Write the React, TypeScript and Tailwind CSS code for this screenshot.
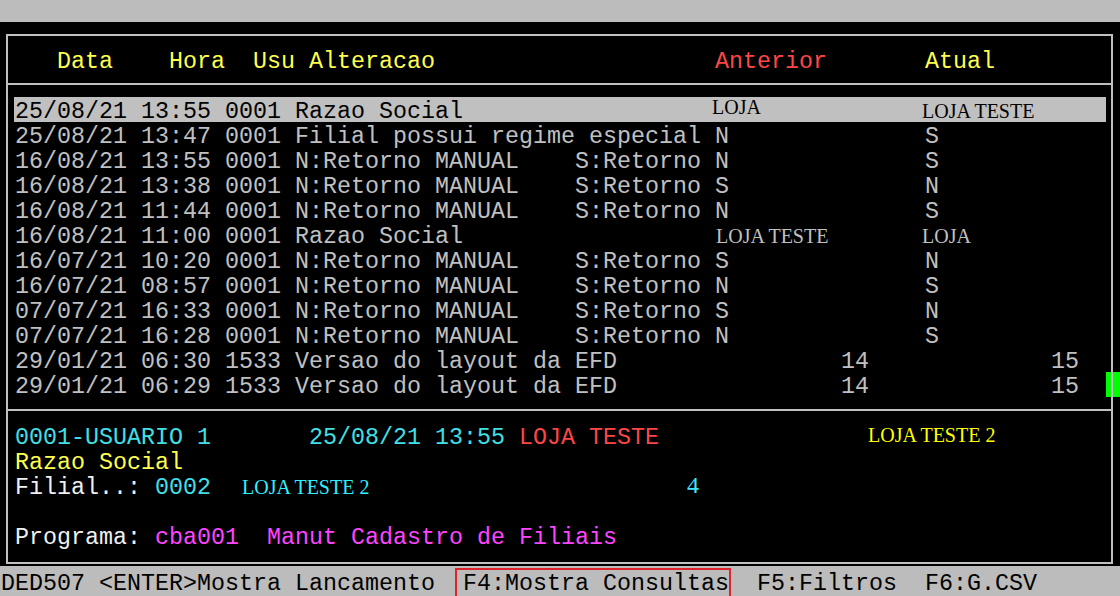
import React from 'react';

type Row = {
    d: string;
    ant: string;
    atu: string;
    serif?: boolean;
    sel?: boolean;
    antCls?: string;
    atuCls?: string;
};

const rows: Row[] = [
    { d: '25/08/21 13:55 0001 Razao Social', ant: 'LOJA', atu: 'LOJA TESTE', serif: true, sel: true, antCls: 'ml-[-3px] mb-[5px]', atuCls: 'ml-[-3px] mt-[4px]' },
    { d: '25/08/21 13:47 0001 Filial possui regime especial', ant: 'N', atu: 'S' },
    { d: '16/08/21 13:55 0001 N:Retorno MANUAL    S:Retorno', ant: 'N', atu: 'S' },
    { d: '16/08/21 13:38 0001 N:Retorno MANUAL    S:Retorno', ant: 'S', atu: 'N' },
    { d: '16/08/21 11:44 0001 N:Retorno MANUAL    S:Retorno', ant: 'N', atu: 'S' },
    { d: '16/08/21 11:00 0001 Razao Social', ant: 'LOJA TESTE', atu: 'LOJA', serif: true, antCls: 'ml-[1px] mt-[3px]', atuCls: 'ml-[-3px] mt-[3px]' },
    { d: '16/07/21 10:20 0001 N:Retorno MANUAL    S:Retorno', ant: 'S', atu: 'N' },
    { d: '16/07/21 08:57 0001 N:Retorno MANUAL    S:Retorno', ant: 'N', atu: 'S' },
    { d: '07/07/21 16:33 0001 N:Retorno MANUAL    S:Retorno', ant: 'S', atu: 'N' },
    { d: '07/07/21 16:28 0001 N:Retorno MANUAL    S:Retorno', ant: 'N', atu: 'S' },
    { d: '29/01/21 06:30 1533 Versao do layout da EFD', ant: '         14', atu: '         15' },
    { d: '29/01/21 06:29 1533 Versao do layout da EFD', ant: '         14', atu: '         15' },
];

export default function App() {
    return (
        <div className="relative w-[1120px] h-[596px] overflow-hidden bg-black font-['Liberation_Mono','Courier_New',monospace] text-[23.33px] leading-[25px] text-[#c0c0c0]">
            <div className="h-[22px] bg-[#bcbcbc]" />

            {/* scroll marker, sits under the right border */}
            <div className="absolute left-[1106px] top-[372px] w-[14px] h-[25px] bg-[#00ff00]" />

            <div className="relative mt-[12px] ml-[6px] w-[1107px] border-2 border-[#c0c0c0]">
                {/* header */}
                <div className="flex items-center h-[49px] border-b-2 border-[#c0c0c0] pl-[7px] whitespace-pre">
                    <div className="w-[700px] pt-[5px] text-[#ffff4d]">{'   Data    Hora  Usu Alteracao'}</div>
                    <div className="w-[210px] pt-[5px] text-[#ff4646]">Anterior</div>
                    <div className="pt-[5px] text-[#ffff4d]">Atual</div>
                </div>

                {/* list */}
                <div className="border-b-2 border-[#c0c0c0] pt-[12px] pb-[12px] pl-[6px] pr-[5px]">
                    {rows.map((r, i) => (
                        <div
                            key={i}
                            className={`flex items-center h-[25px] pl-[1px] whitespace-pre ${r.sel ? 'bg-[#c0c0c0] text-black' : ''}`}
                        >
                            <div className="w-[700px] pt-[5px]">{r.d}</div>
                            {r.serif ? (
                                <>
                                    <div className="w-[210px] flex">
                                        <span className={`font-['Liberation_Serif',serif] text-[20px] ${r.antCls}`}>{r.ant}</span>
                                    </div>
                                    <div className="flex">
                                        <span className={`font-['Liberation_Serif',serif] text-[20px] ${r.atuCls}`}>{r.atu}</span>
                                    </div>
                                </>
                            ) : (
                                <>
                                    <div className="w-[210px] pt-[5px]">{r.ant}</div>
                                    <div className="pt-[5px]">{r.atu}</div>
                                </>
                            )}
                        </div>
                    ))}
                </div>

                {/* detail */}
                <div className="pt-[12px] pb-[14px] pl-[7px] whitespace-pre">
                    <div className="flex items-center h-[25px]">
                        <div className="w-[853px] pt-[5px]">
                            <span className="text-[#40e0e6]">{'0001-USUARIO 1       25/08/21 13:55 '}</span>
                            <span className="text-[#ff4646]">LOJA TESTE</span>
                        </div>
                        <span className="font-['Liberation_Serif',serif] text-[20px] text-[#ffff00]">LOJA TESTE 2</span>
                    </div>
                    <div className="flex items-center h-[25px]">
                        <div className="pt-[5px] text-[#ffff4d]">Razao Social</div>
                    </div>
                    <div className="flex items-center h-[25px]">
                        <div className="w-[227px] pt-[5px]">
                            <span className="text-[#f0f0f0]">{'Filial..: '}</span>
                            <span className="text-[#40e0e6]">0002</span>
                        </div>
                        <div className="w-[445px] flex">
                            <span className="mt-[3px] font-['Liberation_Serif',serif] text-[20px] text-[#30f0ff]">LOJA TESTE 2</span>
                        </div>
                        <span className="font-['Liberation_Serif',serif] text-[24px] text-[#40e0ff]">4</span>
                    </div>
                    <div className="h-[25px]" />
                    <div className="flex items-center h-[25px]">
                        <div className="pt-[5px]">
                            <span className="text-[#f0f0f0]">{'Programa: '}</span>
                            <span className="text-[#ff44ff]">{'cba001  Manut Cadastro de Filiais'}</span>
                        </div>
                    </div>
                </div>
            </div>

            {/* status bar */}
            <div className="mt-[2px] h-[30px] flex items-start overflow-hidden bg-[#bcbcbc] pl-[1px] text-black leading-[20px] whitespace-pre">
                <span className="mt-[8px]">{'DED507 <ENTER>Mostra Lancamento '}</span>
                <span className="ml-[6px] mt-[2px] h-[40px] border-2 border-[#e0222a] pl-[6px] pt-[4px]">F4:Mostra Consultas</span>
                <span className="mt-[8px] pl-[26px]">{'F5:Filtros  F6:G.CSV'}</span>
            </div>
        </div>
    );
}
